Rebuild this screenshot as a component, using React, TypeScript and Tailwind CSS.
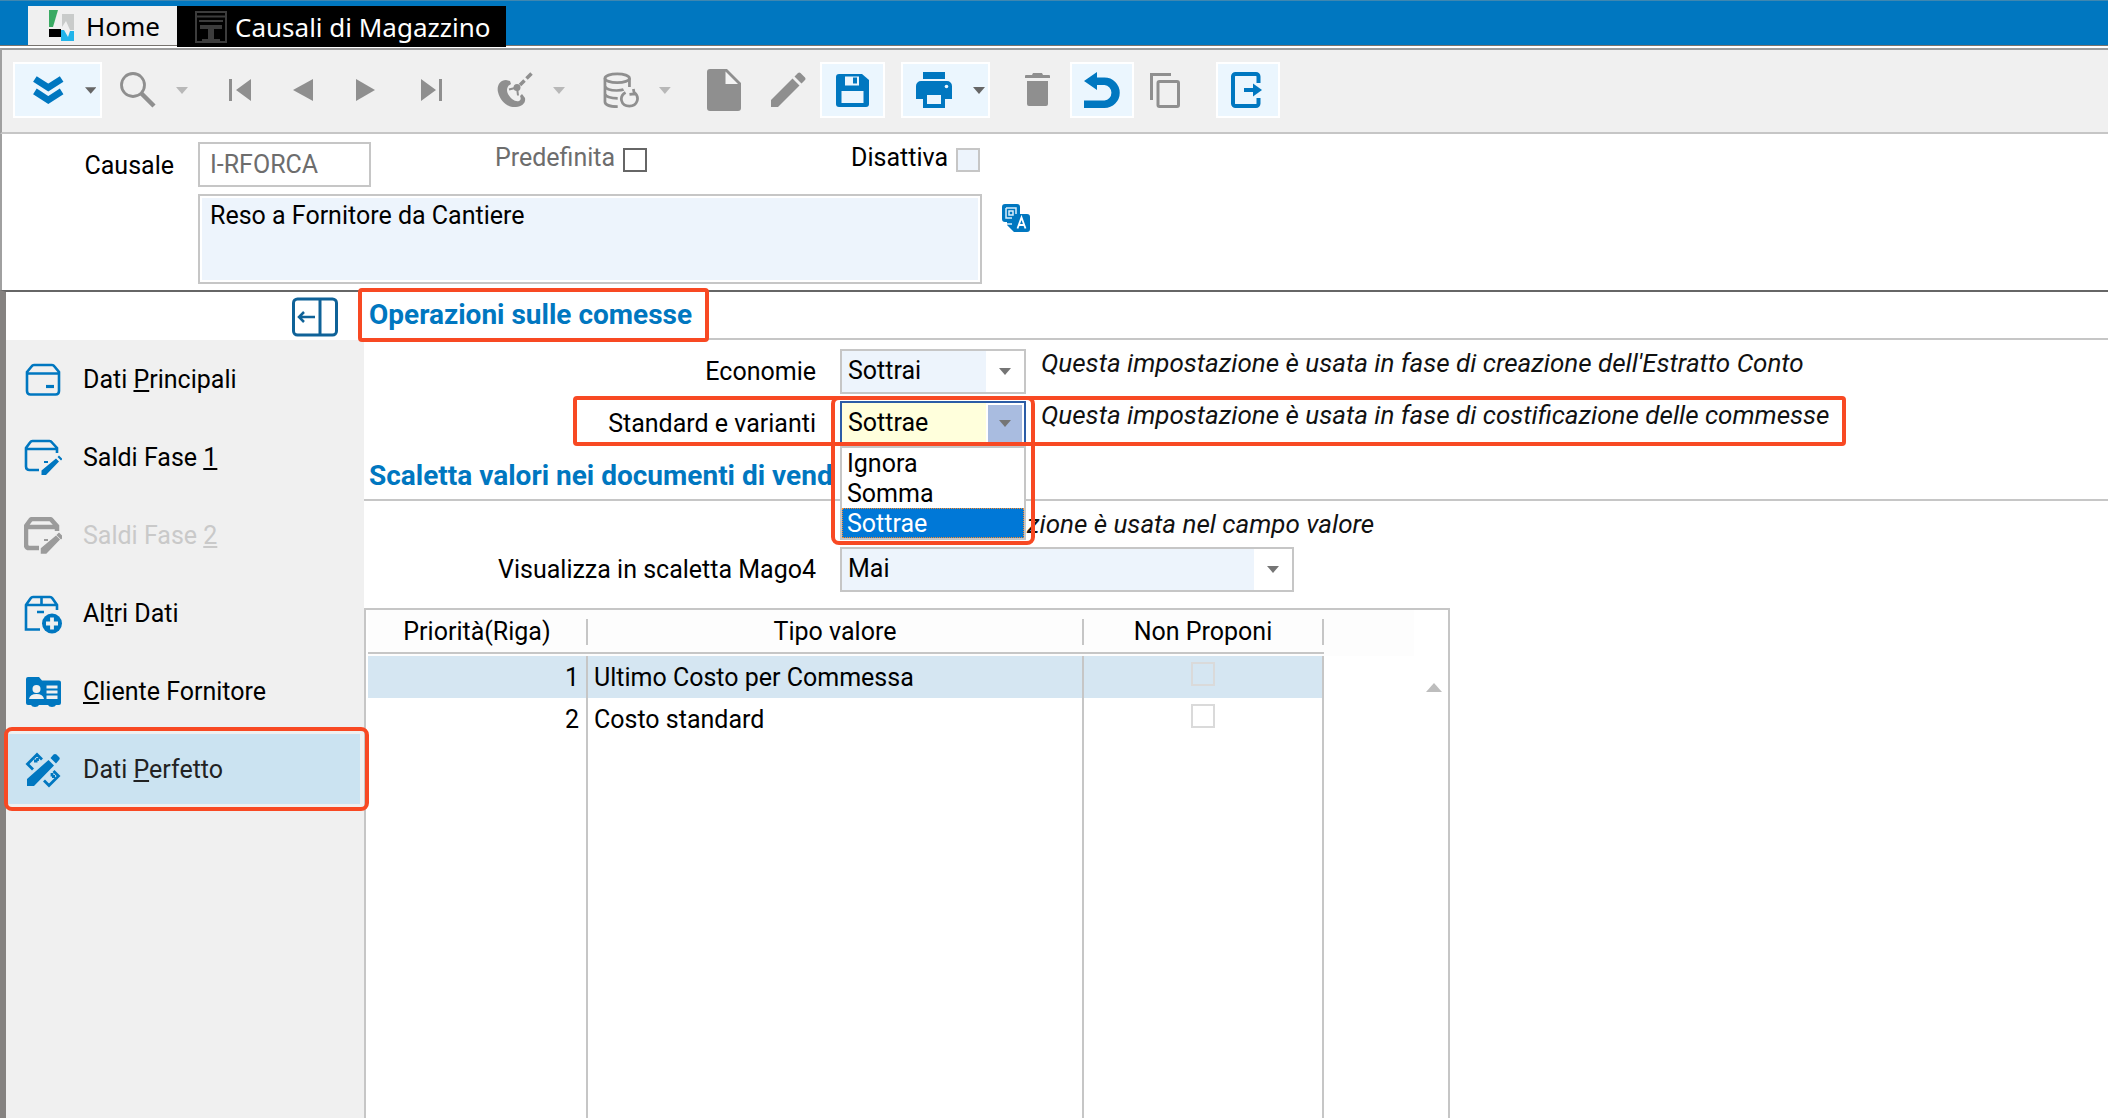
import type { ReactNode } from 'react'

const CARET = 'M0 0h12L6 7z'

function Caret({ className = '' }: { className?: string }) {
  return (
    <svg width="12" height="7" viewBox="0 0 12 7" className={className} aria-hidden="true">
      <path d={CARET} fill="currentColor" />
    </svg>
  )
}

type ToolProps = {
  label: string
  className?: string
  active?: boolean
  children: ReactNode
}

function Tool({ label, className = '', active = false, children }: ToolProps) {
  return (
    <button
      type="button"
      aria-label={label}
      className={`flex h-14 shrink-0 items-center justify-center border-2 ${
        active ? 'border-white bg-[#ebf6fe] text-[#0077c0]' : 'border-transparent text-[#8f8f8f]'
      } ${className}`}
    >
      {children}
    </button>
  )
}

function Toolbar() {
  return (
    <div className="flex h-[86px] items-center border-t-2 border-b-2 border-l-2 border-t-[#9c9c9c] border-b-[#c6c6c6] border-l-[#a0a0a0] bg-[#f0f0f0] pb-0.5 pl-[11px]">
      <Tool label="Espandi" active className="w-[89px] gap-[21px] pl-[18px]">
        <svg width="32" height="30" viewBox="0 0 32 30" fill="none" stroke="currentColor" strokeWidth="7">
          <path d="M2 3.5 16 12.500 30 3.500M2 16.500 16 25.500 30 16.500" />
        </svg>
        <Caret className="mr-1 text-[#666]" />
      </Tool>
      <Tool label="Cerca" className="ml-[6px] w-[92px] gap-5">
        <svg width="36" height="36" viewBox="0 0 36 36" fill="none" stroke="currentColor">
          <circle cx="13" cy="13" r="11.500" strokeWidth="2.800" />
          <path d="M21.500 21.500 34 34" strokeWidth="4.500" />
        </svg>
        <Caret className="text-[#b8b8b8]" />
      </Tool>
      <Tool label="Primo" className="ml-2 w-[64px]">
        <svg width="24" height="24" viewBox="0 0 24 24" fill="currentColor">
          <path d="M1 1h3v22H1zM23 1v22L8 12z" />
        </svg>
      </Tool>
      <Tool label="Precedente" className="w-[62px]">
        <svg width="20" height="24" viewBox="0 0 20 24" fill="currentColor">
          <path d="M20 1v22L0 12z" />
        </svg>
      </Tool>
      <Tool label="Successivo" className="w-[64px]">
        <svg width="20" height="24" viewBox="0 0 20 24" fill="currentColor">
          <path d="M0 1v22l19-11z" />
        </svg>
      </Tool>
      <Tool label="Ultimo" className="w-[68px]">
        <svg width="24" height="24" viewBox="0 0 24 24" fill="currentColor">
          <path d="M1 1v22l15-11zM19 1h3v22h-3z" />
        </svg>
      </Tool>
      <Tool label="Radar" className="ml-[29px] w-[72px] gap-5">
        <svg width="36" height="36" viewBox="0 0 36 36" fill="none" stroke="currentColor">
          <path
            d="M9 8C3 8-.500 14 1 20c2 9 10 16 18 15 6-.5 10-4 9-9l-3-4-2 2c1 2 1 4-1 5-4 1-8-2-11-7-2-4-1-8 3-10l-1-3z"
            fill="currentColor"
            stroke="none"
          />
          <circle cx="20" cy="15.500" r="3.500" fill="currentColor" stroke="none" />
          <path d="M12 17.500 20 15.500l1 8" strokeWidth="2" />
          <path d="m23 13 4.500-4.500M29.500 6.500l5-5" strokeWidth="3.500" />
        </svg>
        <Caret className="text-[#b8b8b8]" />
      </Tool>
      <Tool label="Dati" className="ml-[34px] w-[72px] gap-5">
        <svg width="37" height="37" viewBox="0 0 37 37" fill="none" stroke="currentColor" strokeWidth="2.800">
          <ellipse cx="14.500" cy="6" rx="12.500" ry="4.500" />
          <path d="M2 6v24c0 3 5 5 13 5M27 6v9M2 14c1 3 6 4.500 12 4.500 3 0 5 0 7-1M2 22c1 3 6 4.500 13 4.500" />
          <path d="M23 20.500c-7 4-5 14 4 14 8 0 11-9 5-14M31 17l1 5-5 .500" />
        </svg>
        <Caret className="text-[#b8b8b8]" />
      </Tool>
      <Tool label="Nuovo" className="ml-[27px] w-[48px]">
        <svg width="34" height="42" viewBox="0 0 34 42" fill="currentColor">
          <path d="M3 0h17l14 14v25a3 3 0 0 1-3 3H3a3 3 0 0 1-3-3V3a3 3 0 0 1 3-3z" />
          <path d="M18.500 2.500V15H31z" fill="#f4f4f4" />
        </svg>
      </Tool>
      <Tool label="Modifica" className="ml-[14px] w-[52px]">
        <svg width="36" height="36" viewBox="0 0 36 36" fill="currentColor">
          <path d="M22.500 6.500 29.500 13.500 8 35H1v-7zM24.500 4.500 28 1a2 2 0 0 1 2.500 0L35 5.500a2 2 0 0 1 0 2.500l-3.500 3.500z" />
        </svg>
      </Tool>
      <Tool label="Salva" active className="ml-[6px] w-[65px]">
        <svg width="33" height="33" viewBox="0 0 33 33" fill="currentColor">
          <path d="M3 0h23l7 6v24a3 3 0 0 1-3 3H3a3 3 0 0 1-3-3V3a3 3 0 0 1 3-3z" />
          <path d="M9 2.500h14v9H9zM5.500 17h22v12h-22z" fill="#ebf6fe" />
          <path d="M17 3.500h4v6h-4z" />
        </svg>
      </Tool>
      <Tool label="Stampa" active className="ml-4 w-[89px] gap-[21px] pl-[12px]">
        <svg width="36" height="36" viewBox="0 0 36 36" fill="currentColor">
          <path d="M7 0h22v7H7zM5 9h26a5 5 0 0 1 5 5v13h-7v9H7v-9H0V14a5 5 0 0 1 5-5z" />
          <path d="M11 23h14v9H11z" fill="#ebf6fe" />
          <circle cx="30.500" cy="14.500" r="1.800" fill="#ebf6fe" />
        </svg>
        <Caret className="mr-[3px] text-[#666]" />
      </Tool>
      <Tool label="Elimina" className="ml-5 w-[54px]">
        <svg width="25" height="34" viewBox="0 0 25 34" fill="currentColor">
          <path d="M8 0h9l1 2h6a1 1 0 0 1 1 1v2H0V3a1 1 0 0 1 1-1h6zM2 8h21v23a2 2 0 0 1-2 2H4a2 2 0 0 1-2-2z" />
        </svg>
      </Tool>
      <Tool label="Annulla" active className="ml-[6px] w-[64px]">
        <svg width="36" height="37" viewBox="0 0 36 37" fill="currentColor">
          <path d="M0 9 13 0v5.500h7.500a15.200 15.200 0 0 1 0 30.500H0v-7.500h20.500a7.800 7.800 0 0 0 0-15.500H13v5z" />
        </svg>
      </Tool>
      <Tool label="Copia" className="ml-1 w-[54px]">
        <svg width="30" height="35" viewBox="0 0 30 35" fill="none" stroke="currentColor" strokeWidth="3">
          <path d="M1.500 27V1.500H21" />
          <rect x="8" y="8.500" width="20.500" height="25" rx="1.500" />
        </svg>
      </Tool>
      <Tool label="Esci" active className="ml-6 w-[64px] pr-1">
        <svg width="31" height="36" viewBox="0 0 31 36" fill="none" stroke="currentColor" strokeWidth="4">
          <path d="M27.500 11V4.500a2.500 2.500 0 0 0-2.500-2.500H4.500A2.500 2.500 0 0 0 2 4.500v27A2.500 2.500 0 0 0 4.500 34H25a2.500 2.500 0 0 0 2.500-2.500V26" />
          <path d="M13 18h10" />
          <path d="M22 11.500 31 18l-9 6.500z" fill="currentColor" stroke="none" />
        </svg>
      </Tool>
    </div>
  )
}

function BoxIcon() {
  return (
    <svg width="36" height="36" viewBox="0 0 36 36" fill="none" stroke="currentColor" strokeWidth="2.600">
      <path d="M2 10 6.500 4.500Q7.500 3 9 3h18q1.500 0 2.500 1.500L34 10v19q0 3.500-3.500 3.500h-25Q2 32.500 2 29zM2 11.500h32" />
      <path d="M21 24.500h8" strokeWidth="3.200" />
    </svg>
  )
}

function BoxEditIcon({ disabled = false }: { disabled?: boolean }) {
  return (
    <svg width="38" height="38" viewBox="0 0 38 38" fill="none" stroke="currentColor" strokeWidth={disabled ? 4.5 : 2.6}>
      <path d="M15 31H5.500Q2 31 2 27.500V9L6 3.500Q7 2 8.500 2h17Q27 2 28 3.500L33 9v5M2 10h31" />
      <path d="M20 23h4" strokeWidth="2" />
      <path
        d="m32 19.500 3 3L22 36h-4.500v-4.500zM33.500 18l1.500-1.500 3.500 3.500-1.500 1.500z"
        fill="currentColor"
        stroke={disabled ? 'currentColor' : 'none'}
        strokeWidth="1.500"
      />
    </svg>
  )
}

function BoxAddIcon() {
  return (
    <svg width="38" height="39" viewBox="0 0 38 39" fill="none" stroke="currentColor" strokeWidth="2.600">
      <path d="M16 34.500H2V10l4.500-6.500Q7.500 2 9 2h17q1.500 0 2.500 1.500L33 10v5M2 10h31M17.500 2v8M13 17h7" />
      <circle cx="28" cy="28.500" r="10" fill="currentColor" stroke="none" />
      <path d="M28 22.500v12M22 28.500h12" stroke="#f0f0f0" strokeWidth="3.800" />
    </svg>
  )
}

function ContactIcon() {
  return (
    <svg width="35" height="30" viewBox="0 0 35 30" fill="currentColor">
      <path d="M2 0h11l3 3.500h17a2 2 0 0 1 2 2V26a2 2 0 0 1-2 2h-3q-1 2-4 2t-4-2h-9q-1 2-4 2t-4-2H2a2 2 0 0 1-2-2V2a2 2 0 0 1 2-2z" />
      <g fill="#f0f0f0">
        <circle cx="10.500" cy="12" r="4" />
        <path d="M3 22q1-5 7.500-5t7.500 5zM20.500 8.500h11v3h-11zM20.500 13.500h11v3h-11zM20.500 18.500h11v3.500h-11z" />
      </g>
    </svg>
  )
}

function DesignIcon() {
  return (
    <svg width="36" height="36" viewBox="0 0 36 36" fill="none" stroke="currentColor" strokeWidth="2.800">
      <path d="M8 17.500 2.500 12 12 2.500l5 5M12.500 9H9M12.500 9V6M19 28.500l5 5L33.500 24l-5-5M27 24.500h3M27 24.500V21" />
      <path d="m23.500 8 5.500 5.500L9 34H2v-7zM25.500 6l3-3.500q1.500-1 3 0l2.500 2.500q1.500 1.500 0 3l-3 3.500z" fill="currentColor" stroke="none" />
    </svg>
  )
}

function SideNav() {
  const item = 'flex h-[78px] w-full items-center text-left'
  const icon = 'mr-[19px] ml-4 flex w-[42px] justify-center'
  return (
    <aside className="flex w-[358px] shrink-0 flex-col">
      <div className="flex h-12 items-center justify-end pt-0.5 pr-[26px]">
        <button type="button" aria-label="Comprimi menu" className="text-[#0f6298]">
          <svg width="46" height="40" viewBox="0 0 46 40" fill="none" stroke="currentColor" strokeWidth="3">
            <rect x="1.500" y="2" width="43" height="36" rx="4" />
            <path d="M28 2v36" />
            <path d="M7 20h16M12 15l-5 5 5 5" strokeWidth="2.500" />
          </svg>
        </button>
      </div>
      <nav className="flex-1 bg-[#f0f0f0]">
        <button type="button" className={`${item} pt-0.5`}>
          <span className={`${icon} text-[#0077c0]`}><BoxIcon /></span>
          <span>Dati <u>P</u>rincipali</span>
        </button>
        <button type="button" className={`${item} pt-0.5`}>
          <span className={`${icon} text-[#0077c0]`}><BoxEditIcon /></span>
          <span>Saldi Fase <u>1</u></span>
        </button>
        <button type="button" disabled className={`${item} pt-0.5 text-[#c9c9c9]`}>
          <span className={`${icon} text-[#9b9b9b]`}><BoxEditIcon disabled /></span>
          <span>Saldi Fase <u>2</u></span>
        </button>
        <button type="button" className={`${item} pt-0.5`}>
          <span className={`${icon} text-[#0077c0]`}><BoxAddIcon /></span>
          <span>Al<u>t</u>ri Dati</span>
        </button>
        <button type="button" className={`${item} pt-0.5`}>
          <span className={`${icon} text-[#0077c0]`}><ContactIcon /></span>
          <span><u>C</u>liente Fornitore</span>
        </button>
        <div className="relative bg-[#f0f0f0] px-0.5">
          <button type="button" className={`${item} border-y-4 border-r-2 border-[#f0f0f0] bg-[#cbe3f1] pt-0.5 text-[#222]`}>
            <span className="mr-[19px] ml-[14px] flex w-[42px] justify-center text-[#0077c0]"><DesignIcon /></span>
            <span>Dati <u>P</u>erfetto</span>
          </button>
          <div className="pointer-events-none absolute -top-[3px] -right-[5px] -bottom-[3px] -left-0.5 z-10 rounded-lg border-4 border-[#f84923]" />
        </div>
      </nav>
    </aside>
  )
}

function TabBar() {
  return (
    <header className="border-t border-t-[#3f87b0] bg-[#0077c0] font-['Noto_Sans'] text-[26px] leading-[34px]">
      <div className="flex h-[44px] pt-[5px] pl-7">
        <button type="button" className="flex w-[149px] items-center gap-3 bg-[#f0f0f0] pl-[21px]">
          <svg width="25" height="31" viewBox="0 0 25 31" aria-hidden="true">
            <path d="M0 0h9L4 17H0z" fill="#3aaa63" />
            <path d="M13 4h12v16h-4l-4-9-4 6z" fill="#c9cbca" />
            <path d="M0 19h12v8H0z" fill="#000" />
            <path d="M12 20h3l4 7 2-6h4v10H12z" fill="#22b4ea" />
          </svg>
          Home
        </button>
        <button type="button" className="flex h-[41px] w-[329px] items-center bg-black pl-[18px] whitespace-nowrap text-white">
          <svg width="32" height="32" viewBox="0 0 32 32" fill="none" stroke="#3c3c3c" strokeWidth="2" className="mr-2 shrink-0" aria-hidden="true">
            <path d="M1 1h30v30H1zM1 5.500h30M4 10h24" />
            <path d="M5 14h22v4h-8v10h6v2H7v-2h6V18H5z" fill="#3c3c3c" stroke="none" />
          </svg>
          Causali di Magazzino
        </button>
      </div>
      <div className="h-[3px] border-t border-t-[#77736f] bg-white" />
    </header>
  )
}

function CausaleForm() {
  return (
    <section className="flex h-[156px] border-l-2 border-l-[#a0a0a0] pt-2">
      <label htmlFor="causale" className="mt-[9px] mr-6 w-[172px] shrink-0 text-right">
        Causale
      </label>
      <div className="flex w-[784px] flex-col gap-[7px]">
        <div className="flex items-start">
          <input
            id="causale"
            readOnly
            defaultValue="I-RFORCA"
            className="h-[45px] w-[173px] border-2 border-[#c6c6c6] pb-px pl-[10px] text-[#6d6d6d] outline-none"
          />
          <label className="ml-[124px] flex pt-px text-[#6d6d6d]">
            Predefinita
            <input type="checkbox" className="mt-[5px] ml-2 size-6 appearance-none border-2 border-[#666] bg-white" />
          </label>
          <label className="mr-0.5 ml-auto flex pt-px">
            Disattiva
            <input type="checkbox" className="mt-[5px] ml-2 size-6 appearance-none border-2 border-[#c6c6c6] bg-[#edf4fc]" />
          </label>
        </div>
        <textarea
          aria-label="Descrizione"
          defaultValue="Reso a Fornitore da Cantiere"
          className="h-[90px] resize-none border-2 border-[#c6c6c6] bg-[#edf4fc] pt-[5px] pl-[10px] shadow-[inset_0_0_0_2px_#fff] outline-none"
        />
      </div>
      <button type="button" aria-label="Traduci" className="mt-[62px] ml-5 self-start text-[#0077c0]">
        <svg width="28" height="28" viewBox="0 0 28 28" fill="none" stroke="currentColor">
          <path d="M3 0h12a3 3 0 0 1 3 3v7h7a3 3 0 0 1 3 3v12a3 3 0 0 1-3 3H12l-7-7v-3H3a3 3 0 0 1-3-3V3a3 3 0 0 1 3-3z" fill="currentColor" stroke="none" />
          <path d="M4 4h10v6M4 4v10h6M7 7h4v4H7zM5 20h5" stroke="#d9eefa" strokeWidth="1.500" />
          <path d="m15.500 24.500 4-11 4 11M17 21h5" stroke="#fff" strokeWidth="1.800" />
        </svg>
      </button>
    </section>
  )
}

const OPTIONS = ['Ignora', 'Somma', 'Sottrae']

type SelectFieldProps = {
  id: string
  label: string
  value: string
  options: string[]
  wide?: boolean
  open?: boolean
}

function SelectField({ id, label, value, options, wide = false, open = false }: SelectFieldProps) {
  return (
    <>
      <label htmlFor={id} className="mt-2 mr-6 w-[452px] shrink-0 text-right">
        {label}
      </label>
      <div className={`relative shrink-0 ${wide ? 'w-[454px]' : 'w-[186px]'}`}>
        <div className={`flex h-[45px] border-2 bg-white ${open ? 'border-[#2b5ca6]' : 'border-[#c6c6c6]'}`}>
          <select
            id={id}
            defaultValue={value}
            className={`w-full appearance-none pb-0.5 pl-[6px] outline-none ${
              open
                ? 'bg-[linear-gradient(to_left,#fff_38px,#ffffdc_38px)]'
                : 'bg-[linear-gradient(to_left,#fff_38px,#edf4fc_38px)]'
            }`}
          >
            {options.map((option) => (
              <option key={option}>{option}</option>
            ))}
          </select>
        </div>
        <span
          className={`pointer-events-none absolute top-1 right-1 bottom-1 flex w-[34px] items-center justify-center text-[#757575] ${
            open ? 'bg-[#a9bce0]' : ''
          }`}
        >
          <Caret />
        </span>
        {open && (
          <>
            <ul role="listbox" aria-label={label} className="absolute top-full left-0 z-10 w-full border-2 border-[#c6c6c6] bg-white">
              {OPTIONS.map((option) => (
                <li
                  key={option}
                  role="option"
                  aria-selected={option === value}
                  className={`h-[30px] pl-[5px] leading-8 ${
                    option === value
                      ? 'bg-[#0078d7] text-white outline-1 -outline-offset-1 outline-[#ff8a28] outline-dotted'
                      : ''
                  }`}
                >
                  {option}
                </li>
              ))}
            </ul>
            <div className="pointer-events-none absolute -top-[5px] -right-[9px] -left-[9px] z-20 h-[149px] rounded-lg border-4 border-[#f84923]" />
          </>
        )}
      </div>
    </>
  )
}

const ROWS = [
  { priority: 1, type: 'Ultimo Costo per Commessa' },
  { priority: 2, type: 'Costo standard' },
]

function ValuesTable() {
  const head = 'h-[35px] border-b-2 border-[#c6c6c6]'
  const headText = 'block h-[26px] border-r-2 border-[#c6c6c6] leading-[26px] font-normal'
  return (
    <div className="mt-4 flex w-[1086px] flex-1 border-x-2 border-t-2 border-[#c6c6c6] pl-0.5">
      <div className="flex w-[956px] flex-col">
        <table className="w-full table-fixed border-separate border-spacing-0">
          <colgroup>
            <col className="w-[220px]" />
            <col />
            <col className="w-[240px]" />
          </colgroup>
          <thead>
            <tr className="bg-[#fdfdfd]">
              {['Priorità(Riga)', 'Tipo valore', 'Non Proponi'].map((title) => (
                <th key={title} scope="col" className="p-0 pt-[9px] pb-0.5">
                  <div className={head}>
                    <span className={headText}>{title}</span>
                  </div>
                </th>
              ))}
            </tr>
          </thead>
          <tbody>
            {ROWS.map((row, index) => (
              <tr key={row.priority} className={index === 0 ? 'bg-[#d5e6f2]' : ''}>
                <td className="h-[42px] border-r-2 border-[#c6c6c6] p-0 pt-0.5 pr-[7px] text-right">{row.priority}</td>
                <td className="border-r-2 border-[#c6c6c6] p-0 pt-0.5 pl-[6px]">{row.type}</td>
                <td className="border-r-2 border-[#c6c6c6] p-0">
                  <input
                    type="checkbox"
                    aria-label={`Non proponi ${row.type}`}
                    className="mx-auto mb-[6px] block size-6 appearance-none border-2 border-[#dadada]"
                  />
                </td>
              </tr>
            ))}
          </tbody>
        </table>
        <div className="flex flex-1">
          <div className="w-[220px] border-r-2 border-[#c6c6c6]" />
          <div className="flex-1 border-r-2 border-[#c6c6c6]" />
          <div className="w-[240px] border-r-2 border-[#c6c6c6]" />
        </div>
      </div>
      <div className="h-[46px] w-[90px] bg-[#fdfdfd]" />
      <svg width="16" height="9" viewBox="0 0 16 9" className="mt-[73px] ml-3 text-[#bdbdbd]" aria-hidden="true">
        <path d="M8 0l8 9H0z" fill="currentColor" />
      </svg>
    </div>
  )
}

function Details() {
  const heading = 'relative h-12 border-b-2 border-[#c6c6c6] pl-[5px] text-[28px] font-bold leading-[46px] text-[#0077c0]'
  const note = 'text-[26px] leading-7 italic text-[#111]'
  return (
    <main className="flex min-w-0 flex-1 flex-col">
      <h2 className={heading}>
        Operazioni sulle comesse
        <div className="pointer-events-none absolute -top-1 -left-[6px] h-[54px] w-[351px] rounded border-4 border-[#f84923]" />
      </h2>
      <div className="mt-[9px] flex">
        <SelectField id="economie" label="Economie" value="Sottrai" options={['Sottrai']} />
        <p className={`${note} ml-[15px]`}>Questa impostazione è usata in fase di creazione dell'Estratto Conto</p>
      </div>
      <div className="relative z-10 mt-[7px] flex w-fit">
        <SelectField id="standard" label="Standard e varianti" value="Sottrae" options={OPTIONS} open />
        <p className={`${note} ml-[15px]`}>Questa impostazione è usata in fase di costificazione delle commesse</p>
        <div className="pointer-events-none absolute -top-[5px] -right-[17px] left-[209px] z-20 h-[50px] rounded border-4 border-[#f84923]" />
      </div>
      <h2 className={`${heading} mt-[7px]`}>Scaletta valori nei documenti di vend</h2>
      <p className={`${note} mt-[9px] pl-[663px]`}>zione è usata nel campo valore</p>
      <div className="mt-[9px] flex">
        <SelectField id="scaletta" label="Visualizza in scaletta Mago4" value="Mai" options={['Mai']} wide />
      </div>
      <ValuesTable />
    </main>
  )
}

export default function App() {
  return (
    <div className="flex min-h-screen flex-col bg-white font-[Roboto,sans-serif] text-[25px] leading-[30px] text-black">
      <TabBar />
      <Toolbar />
      <CausaleForm />
      <div className="flex flex-1 border-t-2 border-l-[6px] border-t-[#666] border-l-[#858280]">
        <SideNav />
        <Details />
      </div>
    </div>
  )
}
